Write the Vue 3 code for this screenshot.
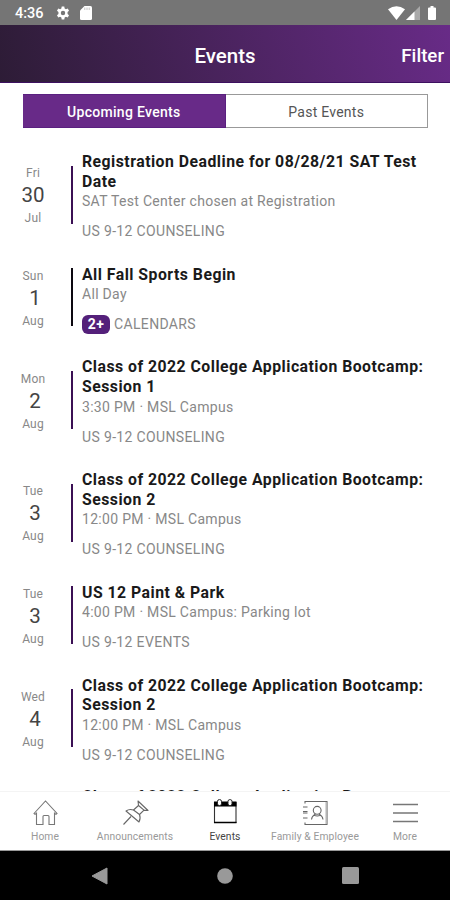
<script setup>
import { ref } from 'vue'

const activeTab = ref('upcoming')

const bootcamp = 'Class of 2022 College Application Bootcamp: Session '

const events = [
  { id: 1, day: 'Fri', date: 30, month: 'Jul', title: 'Registration Deadline for 08/28/21 SAT Test Date', info: 'SAT Test Center chosen at Registration', calendar: 'US 9-12 COUNSELING', color: '#3b1054' },
  { id: 2, day: 'Sun', date: 1, month: 'Aug', title: 'All Fall Sports Begin', info: 'All Day', calendar: 'CALENDARS', badge: '2+', color: '#0c0810' },
  { id: 3, day: 'Mon', date: 2, month: 'Aug', title: bootcamp + '1', info: '3:30 PM · MSL Campus', calendar: 'US 9-12 COUNSELING', color: '#3b1054' },
  { id: 4, day: 'Tue', date: 3, month: 'Aug', title: bootcamp + '2', info: '12:00 PM · MSL Campus', calendar: 'US 9-12 COUNSELING', color: '#3b1054' },
  { id: 5, day: 'Tue', date: 3, month: 'Aug', title: 'US 12 Paint & Park', info: '4:00 PM · MSL Campus: Parking lot', calendar: 'US 9-12 EVENTS', color: '#3b1054' },
  { id: 6, day: 'Wed', date: 4, month: 'Aug', title: bootcamp + '2', info: '12:00 PM · MSL Campus', calendar: 'US 9-12 COUNSELING', color: '#3b1054' },
]

// only the top edge of this one shows above the nav
const nextTitle = 'Class of 2022 College Application Bootcamp:'
</script>

<template>
  <div class="phone">
    <div class="status">
      <span class="clock">4:36</span>
      <svg class="gear" width="14" height="14" viewBox="0 0 24 24" fill="#fff">
        <path fill-rule="evenodd" d="M9.8 1h4.4l.6 3.2 2.2 1.3 3.1-1.1 2.2 3.8-2.5 2.1v3.4l2.5 2.1-2.2 3.8-3.1-1.1-2.2 1.3-.6 3.2H9.8l-.6-3.2L7 18.5l-3.1 1.1-2.2-3.8 2.5-2.1v-3.4L1.7 8.2l2.2-3.8L7 5.5l2.2-1.3zM12 8.2a3.8 3.8 0 1 0 0 7.6 3.8 3.8 0 0 0 0-7.6z" />
      </svg>
      <svg class="sd" width="12" height="14" viewBox="0 0 12 14">
        <path d="M4.5 0h6Q12 0 12 1.5v11Q12 14 10.5 14h-9Q0 14 0 12.5V4.5z" fill="#fff" />
        <path d="M4.8 1.5V4M7 1.5V4M9.2 1.5V4" stroke="#c4c4c4" stroke-width="1" />
      </svg>
      <span class="spacer"></span>
      <svg width="17" height="14" viewBox="0 0 17 14">
        <path d="M0 3.2Q8.5-2.8 17 3.2L8.5 14z" fill="#fff" />
      </svg>
      <svg class="signal" width="14" height="14" viewBox="0 0 14 14">
        <path d="M14 0v14H0z" fill="#a9a9a9" />
        <path d="M8.5 5.5V14H0z" fill="#fff" />
      </svg>
      <svg class="battery" width="8" height="14" viewBox="0 0 8 14">
        <path d="M2.5 0h3v1.5H7q1 0 1 1V13q0 1-1 1H1q-1 0-1-1V2.5q0-1 1-1h1.5z" fill="#fff" />
      </svg>
    </div>

    <header class="header">
      <h1>Events</h1>
      <span class="filter">Filter</span>
    </header>

    <div class="tabs">
      <button class="tab" :class="{ active: activeTab === 'upcoming' }" @click="activeTab = 'upcoming'">Upcoming Events</button>
      <button class="tab" :class="{ active: activeTab === 'past' }" @click="activeTab = 'past'">Past Events</button>
    </div>

    <main class="list">
      <article v-for="ev in events" :key="ev.id" class="event">
        <div class="when">
          <span class="small">{{ ev.day }}</span>
          <span class="date" :class="{ single: ev.date < 10 }">{{ ev.date }}</span>
          <span class="small">{{ ev.month }}</span>
        </div>
        <div class="bar" :style="{ background: ev.color }"></div>
        <div class="details">
          <h2>{{ ev.title }}</h2>
          <p class="info">{{ ev.info }}</p>
          <p class="calendar"><span v-if="ev.badge" class="badge">{{ ev.badge }}</span>{{ ev.calendar }}</p>
        </div>
      </article>
      <h2 class="next">{{ nextTitle }}</h2>
    </main>

    <nav class="nav">
      <a class="item">
        <svg width="28" height="28" viewBox="0 0 28 28" fill="none" stroke="#777" stroke-width="1.1">
          <path d="M3 14.5 14.5 2 26 14.5l-1 .9-1.500-1.200V25.500h-5.500v-8q0-1-1-1h-4q-1 0-1 1v8H5.500V14.200L4 15.400z" />
        </svg>
        <span>Home</span>
      </a>
      <a class="item">
        <svg width="28" height="28" viewBox="0 0 28 28" fill="none" stroke="#666" stroke-width="1.1" stroke-linejoin="round">
          <path d="M17 2 27 11.500l-4-.3-4.500 4.300q1.500 4-.5 7.500L5 12q3.500-2.500 7.500-1L17.500 6.500z" />
          <path d="M17.500 6.500 23 11.200M12.500 11l6 4.500M10 17.500 2.500 25.500" />
        </svg>
        <span>Announcements</span>
      </a>
      <a class="item current">
        <svg width="28" height="28" viewBox="0 0 28 28">
          <path d="M3.5 3.5h21.500v20H3.500z" fill="#fff" stroke="#333" stroke-width="1.1" />
          <path d="M3 2.500h22.500v5H3zM3 22.800h22.500v1.400H3z" fill="#000" />
          <rect x="6.5" y=".6" width="4" height="6" rx="1.8" fill="#fff" stroke="#222" />
          <rect x="17" y=".6" width="4" height="6" rx="1.8" fill="#fff" stroke="#222" />
        </svg>
        <span>Events</span>
      </a>
      <a class="item">
        <svg width="28" height="28" viewBox="0 0 28 28" fill="none" stroke="#666" stroke-width="1.1">
          <path d="M4 4.500V2.500h22V25.500H4v-2" />
          <path d="M24.8 3v22" stroke="#ccc" />
          <path d="M2 8h4.500M2 12.500h4.500M2 14h4.500M2 19h4.500" />
          <circle cx="16.2" cy="11.3" r="3.9" />
          <path d="M10.500 20.500q.5-3.500 4-5.500M22 20.500q-.5-3.500-4-5.500M13 16.300q3.200 1.500 6.500 0" />
        </svg>
        <span>Family &amp; Employee</span>
      </a>
      <a class="item">
        <svg width="28" height="28" viewBox="0 0 28 28" stroke="#777" stroke-width="1.4">
          <path d="M2 5.500h25M2 14h25M2 22.500h25" />
        </svg>
        <span>More</span>
      </a>
    </nav>

    <div class="system">
      <svg width="17" height="18" viewBox="0 0 17 18"><path d="M16 1v16L1 9z" fill="#999" stroke="#999" stroke-linejoin="round" /></svg>
      <svg width="16" height="16" viewBox="0 0 16 16"><circle cx="8" cy="8" r="7.8" fill="#999" /></svg>
      <svg width="17" height="17" viewBox="0 0 17 17"><rect width="17" height="17" rx="1.5" fill="#999" /></svg>
    </div>
  </div>
</template>

<style>
body {
  margin: 0;
}
</style>

<style scoped>
.phone {
  width: 450px;
  height: 900px;
  display: flex;
  flex-direction: column;
  overflow: hidden;
  background: #fff;
  font-family: Roboto, "Liberation Sans", sans-serif;
}
.status {
  height: 25px;
  flex: none;
  display: flex;
  align-items: center;
  box-sizing: border-box;
  padding: 1px 14px 0 15px;
  background: #757575;
  color: #fff;
}
.clock {
  width: 41px;
  font-size: 14.5px;
  font-weight: 500;
}
.sd {
  margin-left: 10px;
}
.spacer {
  flex: 1;
}
.signal {
  margin-left: 1px;
}
.battery {
  margin-left: 8px;
}
.header {
  height: 58px;
  flex: none;
  display: grid;
  grid-template-columns: 1fr auto 1fr;
  align-items: center;
  box-sizing: border-box;
  padding: 4px 6px 0;
  border-bottom: 1px solid #3d1060;
  background: linear-gradient(75deg, #2d1c36, #682b87);
  color: #fff;
}
.header h1 {
  grid-column: 2;
  margin: 0;
  font-size: 20.5px;
  font-weight: 500;
}
.filter {
  justify-self: end;
  font-size: 18.7px;
  font-weight: 500;
}
.tabs {
  height: 34px;
  flex: none;
  display: flex;
  margin: 11px 22px 10px 23px;
}
.tab {
  flex: 1;
  padding: 1px 0 0;
  border: 1px solid #999;
  border-left: 0;
  background: #fff;
  color: #555;
  font: 400 14px Roboto, sans-serif;
  letter-spacing: 0.25px;
}
.tab.active {
  border-color: #5a2080;
  background: #682a88;
  color: #fff;
  font-weight: 500;
  letter-spacing: 0.3px;
}
.list {
  flex: 1;
  min-height: 0;
  overflow: hidden;
}
.event {
  display: flex;
  align-items: center;
  padding: 12.4px 20px 9.8px 0;
}
.when {
  width: 66px;
  margin-right: 5px;
  display: flex;
  flex-direction: column;
  align-items: center;
  color: #888;
}
.small {
  font-size: 12px;
  line-height: 18px;
  letter-spacing: 0.2px;
}
.date {
  font-size: 20.5px;
  line-height: 27px;
  color: #444;
}
.single {
  padding-left: 4px;
}
.bar {
  width: 2px;
  height: 58px;
  margin-right: 9px;
  margin-bottom: 2px;
}
.details {
  flex: 1;
  padding-top: 1.6px;
  margin-bottom: -1.6px;
}
h2 {
  margin: 0;
  font-size: 15.8px;
  line-height: 19.7px;
  font-weight: 700;
  letter-spacing: 0.48px;
  color: #1a1a1a;
}
.next {
  margin: 13px 20px 0 82px;
}
.info,
.calendar {
  margin: 0;
  font-size: 14px;
  line-height: 21px;
  color: #888;
}
.info {
  letter-spacing: 0.3px;
}
.calendar {
  display: flex;
  align-items: center;
  margin-top: 9px;
  letter-spacing: 0.35px;
}
.badge {
  width: 28px;
  height: 19px;
  margin-right: 4px;
  border-radius: 6px;
  background: #54207a;
  color: #fff;
  font-weight: 700;
  line-height: 19px;
  text-align: center;
}
.nav {
  height: 60px;
  flex: none;
  display: grid;
  grid-template-columns: repeat(5, 90px);
  box-sizing: border-box;
  padding-top: 7px;
  border-top: 1px solid #f4f4f4;
  border-bottom: 1px solid #999;
  background: #fff;
}
.item {
  display: flex;
  flex-direction: column;
  align-items: center;
  color: #999;
  font-size: 10.3px;
  line-height: 20px;
  letter-spacing: 0.1px;
  white-space: nowrap;
}
.current {
  color: #444;
}
.system {
  height: 49px;
  flex: none;
  display: flex;
  align-items: center;
  justify-content: space-between;
  box-sizing: border-box;
  padding: 0 91px;
  background: #000;
}
</style>
